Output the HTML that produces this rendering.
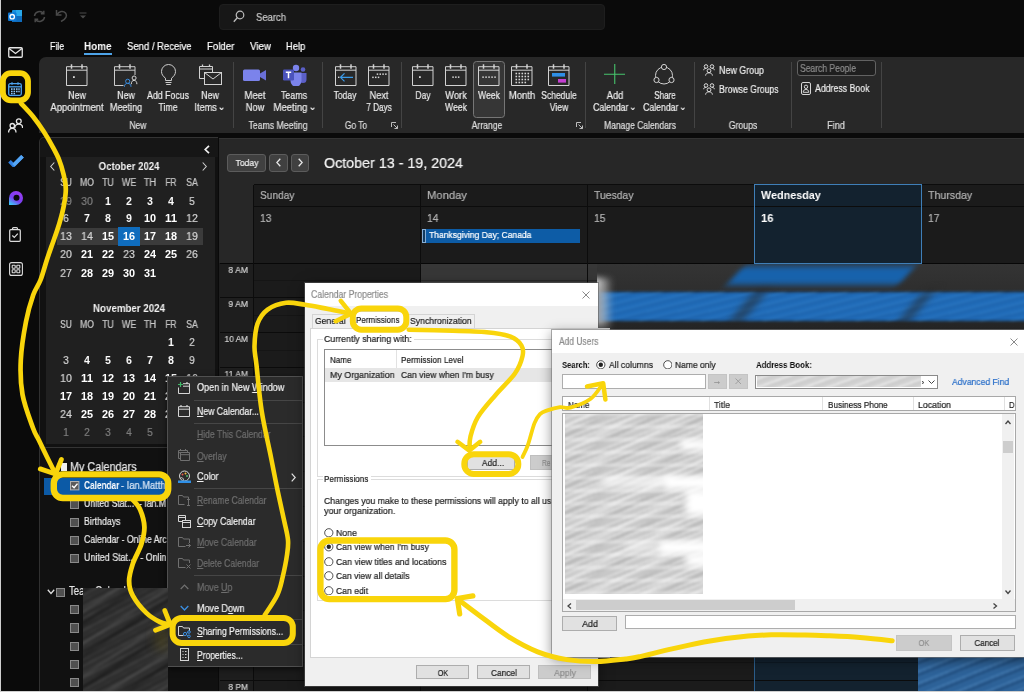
<!DOCTYPE html><html><head><meta charset="utf-8"><title>Outlook Calendar Sharing Permissions</title>
<style>
*{box-sizing:border-box;margin:0;padding:0}
html,body{width:1024px;height:692px;overflow:hidden;background:#0a0a0a}
body{font-family:"Liberation Sans",sans-serif;font-size:11px;color:#e6e6e6;position:relative}
#root{position:absolute;left:0;top:0;width:1024px;height:692px;overflow:hidden;background:#0a0a0a}
.a{position:absolute}
.t{position:absolute;white-space:nowrap;line-height:1;will-change:transform}
.t.l{transform-origin:0 50%}
.t.c{transform:translateX(-50%);text-align:center}
.t.r{transform:translateX(-100%);transform-origin:100% 50%;text-align:right}
u{text-decoration:underline;text-underline-offset:1px}
.t{-webkit-text-stroke:0.22px currentColor}

</style></head><body><div id="root">
<svg width="0" height="0" style="position:absolute"><defs>
<symbol id="cal" viewBox="0 0 22 22"><path d="M0.500 2.700h20.500v18.800h-20.500z M0.500 6.200h20.500" fill="none" stroke="#d2d2d2" stroke-width="1"></path><path d="M5.500 0.200v4.600 M16 0.200v4.600" stroke="#d2d2d2" stroke-width="1.500" fill="none"></path></symbol>
<symbol id="grp" viewBox="0 0 12 12"><g fill="none" stroke="#dcdcdc" stroke-width="1"><circle cx="3" cy="2.500" r="1.800"></circle><circle cx="9" cy="2.500" r="1.800"></circle><circle cx="6" cy="6.800" r="1.900"></circle><path d="M0.700 6.200c0-1.300 1-1.900 2.300-1.900M11.300 6.200c0-1.300-1-1.900-2.300-1.900M2.600 11.600c0.200-1.800 1.500-2.800 3.400-2.800s3.200 1 3.400 2.800"></path></g></symbol>
<symbol id="launch" viewBox="0 0 7 7"><path d="M0.500 5v-4.500h4.500 M2.500 2.500l4 4 M6.500 3.500v3h-3" fill="none" stroke="#bdbdbd"></path></symbol>
</defs></svg>
<div class="a" style="left:0.0px;top:0.0px;width:1.0px;height:692.0px;background:#cfcfcf;"></div>
<svg class="a" style="left:8.0px;top:10.0px;" width="14" height="13" viewBox="0 0 14 13"><rect x="4" y="0" width="10" height="12" rx="1" fill="#1490df"></rect><rect x="8" y="0" width="6" height="6" fill="#28a8ea"></rect><rect x="4" y="6" width="10" height="6" fill="#0f6cbd"></rect><rect x="0" y="2.500" width="8.500" height="8.500" rx="1" fill="#0f78d4"></rect><circle cx="4.200" cy="6.700" r="2.200" fill="none" stroke="#fff" stroke-width="1.300"></circle></svg>
<svg class="a" style="left:33.0px;top:10.0px;" width="13" height="13" viewBox="0 0 13 13"><g fill="none" stroke="#4a4a4a" stroke-width="1.500"><path d="M1.500 6a5 5 0 0 1 9-2.500 M11.500 7a5 5 0 0 1-9 2.500"></path><path d="M10.800 0.800v3h-3 M2.200 12.200v-3h3"></path></g></svg>
<svg class="a" style="left:55.0px;top:9.0px;" width="13" height="13" viewBox="0 0 13 13"><g fill="none" stroke="#4a4a4a" stroke-width="1.500"><path d="M1.500 1v5h5"></path><path d="M1.800 5.800c2-3.500 6.500-4.500 8.700-1.800c2 2.600 0.500 6-4.500 8.500"></path></g></svg>
<svg class="a" style="left:79.0px;top:12.0px;" width="8" height="7" viewBox="0 0 8 7"><path d="M0.500 1h7" stroke="#4a4a4a" stroke-width="1"></path><path d="M1 3.500l3 3l3-3z" fill="#4a4a4a"></path></svg>
<div class="a" style="left:219.0px;top:3.8px;width:386.0px;height:26.0px;background:#171717;border-radius:4px;border:1px solid #1e1e1e;"></div>
<svg class="a" style="left:233.0px;top:10.0px;" width="12" height="13" viewBox="0 0 12 13"><circle cx="7" cy="5" r="3.800" fill="none" stroke="#bdbdbd" stroke-width="1.200"></circle><path d="M4.300 7.800l-3.500 4" stroke="#bdbdbd" stroke-width="1.300"></path></svg>
<div class="t l" style="left: 256px; top: 12.3px; font-size: 10.7px; color: rgb(200, 200, 200); transform: scaleX(0.886);">Search</div>
<svg class="a" style="left:8.0px;top:47.0px;" width="15" height="11" viewBox="0 0 15 11"><rect x="0.750" y="0.750" width="13.500" height="9.500" rx="1" fill="none" stroke="#e6e6e6" stroke-width="1.300"></rect><path d="M1 1.500l6.500 5l6.500-5" fill="none" stroke="#e6e6e6" stroke-width="1.300"></path></svg>
<svg class="a" style="left:8.0px;top:82.0px;" width="14" height="14" viewBox="0 0 14 14"><rect x="0.700" y="1.700" width="12.600" height="11.600" rx="1.500" fill="none" stroke="#4da3ee" stroke-width="1.300"></rect><path d="M0.700 4.800h12.600" stroke="#4da3ee" stroke-width="1.300"></path><path d="M4 0.300v2.400M10 0.300v2.400" stroke="#4da3ee" stroke-width="1.300"></path><g fill="#8cc4f5"><rect x="3" y="6.300" width="1.600" height="1.600"></rect><rect x="5.500" y="6.300" width="1.600" height="1.600"></rect><rect x="8" y="6.300" width="1.600" height="1.600"></rect><rect x="10.300" y="6.300" width="1.400" height="1.600"></rect><rect x="3" y="8.700" width="1.600" height="1.600"></rect><rect x="5.500" y="8.700" width="1.600" height="1.600"></rect><rect x="8" y="8.700" width="1.600" height="1.600"></rect><rect x="10.300" y="8.700" width="1.400" height="1.600"></rect><rect x="3" y="11" width="1.600" height="1.300"></rect><rect x="5.500" y="11" width="1.600" height="1.300"></rect></g></svg>
<svg class="a" style="left:7.5px;top:118.0px;" width="15" height="15" viewBox="0 0 15 15"><g fill="none" stroke="#e6e6e6" stroke-width="1.300"><circle cx="10.800" cy="3.200" r="2.400"></circle><path d="M6.800 10c0-2.500 1.600-3.900 4-3.900s3.800 1.400 3.800 3.900"></path><circle cx="4.300" cy="7.700" r="2.200"></circle><path d="M0.600 14.600c0-2.800 1.500-4.200 3.700-4.200s3.700 1.400 3.700 4.200"></path></g></svg>
<svg class="a" style="left:7.5px;top:155.0px;" width="16" height="12" viewBox="0 0 16 12"><path d="M1.500 6.300l4 4l9-9" fill="none" stroke="#2f7fe0" stroke-width="3.700"></path><path d="M5.500 10.300l9-9" fill="none" stroke="#55a6f5" stroke-width="3.700"></path></svg>
<svg class="a" style="left:7.5px;top:190.0px;" width="16" height="16" viewBox="0 0 16 16"><defs><linearGradient id="lg1" x1="0.800" y1="0" x2="0.200" y2="1"><stop offset="0" stop-color="#9b3bf0"></stop><stop offset="0.600" stop-color="#7a3ff2"></stop><stop offset="1" stop-color="#3ec6f5"></stop></linearGradient></defs><path d="M1 8a7 7 0 1 1 7 7h-7z" fill="url(#lg1)"></path><circle cx="8.500" cy="7.800" r="3" fill="#0a0a0a"></circle></svg>
<svg class="a" style="left:9.0px;top:226.5px;" width="12" height="15" viewBox="0 0 12 15"><g fill="none" stroke="#dcdcdc" stroke-width="1.200"><rect x="0.700" y="2.700" width="10.600" height="11.600" rx="1"></rect><path d="M3.500 2.700v-1a1 1 0 0 1 1-1h3a1 1 0 0 1 1 1v1"></path><path d="M3.300 8.500l2 2l3.500-3.800"></path></g></svg>
<svg class="a" style="left:8.5px;top:262.0px;" width="14" height="14" viewBox="0 0 14 14"><g fill="none" stroke="#dcdcdc" stroke-width="1.100"><rect x="0.600" y="0.600" width="12.800" height="12.800" rx="2"></rect><rect x="3.200" y="3.200" width="3" height="3" rx="0.500"></rect><rect x="7.800" y="3.200" width="3" height="3" rx="0.500"></rect><rect x="3.200" y="7.800" width="3" height="3" rx="0.500"></rect><rect x="7.800" y="7.800" width="3" height="3" rx="0.500"></rect></g></svg>
<div class="t l" style="left: 49.8px; top: 41.3px; font-size: 10.7px; color: rgb(255, 255, 255); transform: scaleX(0.824);">File</div>
<div class="t l" style="left: 84px; top: 41.3px; font-size: 10.7px; color: rgb(255, 255, 255); font-weight: bold; -webkit-text-stroke: 0px; transform: scaleX(0.926);">Home</div>
<div class="a" style="left:84.0px;top:52.8px;width:28.0px;height:1.8px;background:#4da3e8;"></div>
<div class="t l" style="left: 126.7px; top: 41.3px; font-size: 10.7px; color: rgb(255, 255, 255); transform: scaleX(0.89);">Send / Receive</div>
<div class="t l" style="left: 206.9px; top: 41.3px; font-size: 10.7px; color: rgb(255, 255, 255); transform: scaleX(0.904);">Folder</div>
<div class="t l" style="left: 249.5px; top: 41.3px; font-size: 10.7px; color: rgb(255, 255, 255); transform: scaleX(0.914);">View</div>
<div class="t l" style="left: 285.6px; top: 41.3px; font-size: 10.7px; color: rgb(255, 255, 255); transform: scaleX(0.878);">Help</div>
<div class="a" style="left:39.3px;top:57.1px;width:990.0px;height:76.2px;background:#282828;border-radius:7px 0 0 0;"></div>
<svg class="a" style="left:65.8px;top:63.8px;" width="22" height="22"><use href="#cal"></use><rect x="7" y="12.200" width="1.800" height="1.800" fill="#d6d6d6"></rect></svg>
<div class="t c" style="left: 77px; top: 89.5px; font-size: 10.7px; color: rgb(235, 235, 235); transform: translateX(-50%) scaleX(0.823);">New</div>
<div class="t c" style="left: 77px; top: 101.5px; font-size: 10.7px; color: rgb(235, 235, 235); transform: translateX(-50%) scaleX(0.888);">Appointment</div>
<svg class="a" style="left:114.2px;top:63.8px;" width="24" height="23" viewBox="0 0 24 23"><path d="M0.500 2.700h20.500v18.800h-20.500z M0.500 6.200h20.500" fill="none" stroke="#cdcdcd"></path><path d="M5.500 0.200v4.600 M16 0.200v4.600" stroke="#cdcdcd" stroke-width="1.500"></path><rect x="9.500" y="11" width="14.500" height="12" fill="#282828"></rect><circle cx="20.100" cy="14" r="2" fill="none" stroke="#d6d6d6"></circle><path d="M17.300 20.200c0-2.500 1.100-3.800 2.800-3.800s2.800 1.300 2.800 3.800" fill="none" stroke="#d6d6d6"></path><circle cx="13.700" cy="17.300" r="2.100" fill="#282828" stroke="#3b8ee0"></circle><path d="M10.400 22.800c0-2.400 1.300-3.400 3.300-3.400s3.300 1 3.300 3.400" fill="#282828" stroke="#3b8ee0"></path></svg>
<div class="t c" style="left: 125.5px; top: 89.5px; font-size: 10.7px; color: rgb(235, 235, 235); transform: translateX(-50%) scaleX(0.818);">New</div>
<div class="t c" style="left: 125.5px; top: 101.5px; font-size: 10.7px; color: rgb(235, 235, 235); transform: translateX(-50%) scaleX(0.849);">Meeting</div>
<svg class="a" style="left:160.5px;top:63.6px;" width="15" height="22.5" viewBox="0 0 15 22.500"><path d="M4.500 16.500v-2.300c-2.400-1.800-4-3.900-4-6.700a7 7 0 0 1 14 0c0 2.800-1.600 4.900-4 6.700v2.300z M4.500 18.500h6 M5.200 20.500h4.600" fill="none" stroke="#cdcdcd"></path></svg>
<div class="t c" style="left: 168.4px; top: 89.5px; font-size: 10.7px; color: rgb(235, 235, 235); transform: translateX(-50%) scaleX(0.822);">Add Focus</div>
<div class="t c" style="left: 168.4px; top: 101.5px; font-size: 10.7px; color: rgb(235, 235, 235); transform: translateX(-50%) scaleX(0.822);">Time</div>
<svg class="a" style="left:198.5px;top:63.8px;" width="23" height="22" viewBox="0 0 23 22"><path d="M0.500 2.500h13v12h-13z M0.500 5h13" fill="none" stroke="#d2d2d2"></path><path d="M3.500 0.500v2 M10.500 0.500v2" stroke="#d2d2d2" stroke-width="1.300"></path><rect x="5.500" y="8.500" width="17" height="12" fill="#282828" stroke="#d2d2d2"></rect><path d="M5.500 8.500l8.500 6.500l8.500-6.500" fill="none" stroke="#d2d2d2"></path></svg>
<div class="t c" style="left: 209.9px; top: 89.5px; font-size: 10.7px; color: rgb(235, 235, 235); transform: translateX(-50%) scaleX(0.823);">New</div>
<div class="t c" style="left: 209.4px; top: 101.5px; font-size: 10.7px; color: rgb(235, 235, 235); transform: translateX(-50%) scaleX(0.852);">Items<svg width="5.500" height="3.500" viewBox="0 0 5.500 3.500" style="margin-left:2.500px;vertical-align:1px"><path d="M0.600 0.600l2.150 2.100l2.150-2.100" fill="none" stroke="#ebebeb" stroke-width="1.300"></path></svg></div>
<div class="t c" style="left: 138px; top: 120.7px; font-size: 10.2px; color: rgb(222, 222, 222); transform: translateX(-50%) scaleX(0.834);">New</div>
<div class="a" style="left:233.0px;top:61.5px;width:1.0px;height:66.0px;background:#444444;"></div>
<svg class="a" style="left:243.0px;top:69.0px;" width="24" height="13" viewBox="0 0 24 13"><rect x="0" y="0.500" width="17" height="11.500" rx="1.500" fill="#7b83eb"></rect><path d="M17 4.500l6-3.500v10.500l-6-3.500z" fill="#6a70d8"></path></svg>
<div class="t c" style="left: 255px; top: 89.5px; font-size: 10.7px; color: rgb(235, 235, 235); transform: translateX(-50%) scaleX(0.884);">Meet</div>
<div class="t c" style="left: 255px; top: 101.5px; font-size: 10.7px; color: rgb(235, 235, 235); transform: translateX(-50%) scaleX(0.865);">Now</div>
<svg class="a" style="left:283.0px;top:64.0px;" width="24" height="22" viewBox="0 0 24 22"><circle cx="13" cy="4" r="3.200" fill="#7b83eb"></circle><circle cx="20" cy="5.500" r="2.300" fill="#5b5fc7"></circle><path d="M16 9h7.500v6.500a3.500 3.500 0 0 1-7 0z" fill="#5b5fc7"></path><path d="M7 8.500h11.500v8.500a5.500 5.500 0 0 1-11 0z" fill="#7b83eb"></path><rect x="0" y="5.500" width="11" height="11" rx="1.200" fill="#4b53bc"></rect><path d="M2.800 8.200h5.400M5.500 8.200v6" stroke="#fff" stroke-width="1.500" fill="none"></path></svg>
<div class="t c" style="left: 294px; top: 90.3px; font-size: 10.7px; color: rgb(235, 235, 235); transform: translateX(-50%) scaleX(0.826);">Teams</div>
<div class="t c" style="left: 294px; top: 102.3px; font-size: 10.7px; color: rgb(235, 235, 235); transform: translateX(-50%) scaleX(0.891);">Meeting<svg width="5.500" height="3.500" viewBox="0 0 5.500 3.500" style="margin-left:2.500px;vertical-align:1px"><path d="M0.600 0.600l2.150 2.100l2.150-2.100" fill="none" stroke="#ebebeb" stroke-width="1.300"></path></svg></div>
<div class="t c" style="left: 278px; top: 120.7px; font-size: 10.2px; color: rgb(222, 222, 222); transform: translateX(-50%) scaleX(0.854);">Teams Meeting</div>
<div class="a" style="left:322.0px;top:61.5px;width:1.0px;height:66.0px;background:#444444;"></div>
<svg class="a" style="left:334.9px;top:63.8px;" width="22" height="22"><use href="#cal"></use><path d="M18 13.300h-12.500 M9.500 9.300l-4 4l4 4" fill="none" stroke="#3b9be8" stroke-width="1.200"></path><rect x="3" y="12.600" width="1.400" height="1.400" fill="#d6d6d6"></rect></svg>
<div class="t c" style="left: 345.3px; top: 89.5px; font-size: 10.7px; color: rgb(235, 235, 235); transform: translateX(-50%) scaleX(0.796);">Today</div>
<svg class="a" style="left:367.9px;top:63.8px;" width="22" height="22"><use href="#cal"></use><g fill="#d6d6d6"><rect x="8.700" y="9.400" width="1.500" height="1.500"></rect><rect x="11.500" y="9.400" width="1.500" height="1.500"></rect><rect x="14.300" y="9.400" width="1.500" height="1.500"></rect><rect x="17.100" y="9.400" width="1.500" height="1.500"></rect><rect x="4.200" y="12.600" width="1.500" height="1.500"></rect><rect x="7" y="12.600" width="1.500" height="1.500"></rect><rect x="9.800" y="12.600" width="1.500" height="1.500"></rect></g></svg>
<div class="t c" style="left: 378.8px; top: 89.5px; font-size: 10.7px; color: rgb(235, 235, 235); transform: translateX(-50%) scaleX(0.855);">Next</div>
<div class="t c" style="left: 378.8px; top: 101.5px; font-size: 10.7px; color: rgb(235, 235, 235); transform: translateX(-50%) scaleX(0.764);">7 Days</div>
<div class="t c" style="left: 356.2px; top: 120.7px; font-size: 10.2px; color: rgb(222, 222, 222); transform: translateX(-50%) scaleX(0.826);">Go To</div>
<svg class="a" style="left:391.3px;top:121.5px;" width="7" height="7"><use href="#launch"></use></svg>
<div class="a" style="left:400.7px;top:61.5px;width:1.0px;height:66.0px;background:#444444;"></div>
<div class="a" style="left:473.3px;top:60.5px;width:31.3px;height:57.4px;background:#363636;border:1px solid #767676;border-radius:3.500px;"></div>
<svg class="a" style="left:411.5px;top:63.8px;" width="22" height="22"><use href="#cal"></use><rect x="7" y="12.200" width="1.800" height="1.800" fill="#d6d6d6"></rect></svg>
<div class="t c" style="left: 422.6px; top: 89.5px; font-size: 10.7px; color: rgb(235, 235, 235); transform: translateX(-50%) scaleX(0.784);">Day</div>
<svg class="a" style="left:444.7px;top:63.8px;" width="22" height="22"><use href="#cal"></use><g fill="#d6d6d6"><rect x="7.300" y="12.400" width="1.500" height="1.500"></rect><rect x="10.100" y="12.400" width="1.500" height="1.500"></rect><rect x="12.900" y="12.400" width="1.500" height="1.500"></rect></g></svg>
<div class="t c" style="left: 455.7px; top: 89.5px; font-size: 10.7px; color: rgb(235, 235, 235); transform: translateX(-50%) scaleX(0.869);">Work</div>
<div class="t c" style="left: 455.7px; top: 101.5px; font-size: 10.7px; color: rgb(235, 235, 235); transform: translateX(-50%) scaleX(0.811);">Week</div>
<svg class="a" style="left:477.5px;top:63.8px;" width="22" height="22"><use href="#cal"></use><g fill="#d6d6d6"><rect x="4.300" y="12.400" width="1.500" height="1.500"></rect><rect x="7.300" y="12.400" width="1.500" height="1.500"></rect><rect x="10.300" y="12.400" width="1.500" height="1.500"></rect><rect x="13.300" y="12.400" width="1.500" height="1.500"></rect><rect x="16.300" y="12.400" width="1.500" height="1.500"></rect></g></svg>
<div class="t c" style="left: 488.8px; top: 89.5px; font-size: 10.7px; color: rgb(235, 235, 235); transform: translateX(-50%) scaleX(0.807);">Week</div>
<svg class="a" style="left:511.2px;top:63.8px;" width="22" height="22"><use href="#cal"></use><g fill="#d6d6d6"><rect x="4.5" y="8.7" width="1.600" height="1.600"></rect><rect x="7.5" y="8.7" width="1.600" height="1.600"></rect><rect x="10.5" y="8.7" width="1.600" height="1.600"></rect><rect x="13.5" y="8.7" width="1.600" height="1.600"></rect><rect x="16.5" y="8.7" width="1.600" height="1.600"></rect><rect x="4.5" y="11.7" width="1.600" height="1.600"></rect><rect x="7.5" y="11.7" width="1.600" height="1.600"></rect><rect x="10.5" y="11.7" width="1.600" height="1.600"></rect><rect x="13.5" y="11.7" width="1.600" height="1.600"></rect><rect x="16.5" y="11.7" width="1.600" height="1.600"></rect><rect x="4.5" y="14.7" width="1.600" height="1.600"></rect><rect x="7.5" y="14.7" width="1.600" height="1.600"></rect><rect x="10.5" y="14.7" width="1.600" height="1.600"></rect><rect x="13.5" y="14.7" width="1.600" height="1.600"></rect><rect x="16.5" y="14.7" width="1.600" height="1.600"></rect><rect x="4.5" y="17.7" width="1.600" height="1.600"></rect><rect x="7.5" y="17.7" width="1.600" height="1.600"></rect><rect x="10.5" y="17.7" width="1.600" height="1.600"></rect><rect x="13.5" y="17.7" width="1.600" height="1.600"></rect></g></svg>
<div class="t c" style="left: 522px; top: 89.5px; font-size: 10.7px; color: rgb(235, 235, 235); transform: translateX(-50%) scaleX(0.888);">Month</div>
<svg class="a" style="left:548.1px;top:63.8px;" width="22" height="22"><use href="#cal"></use><rect x="4" y="9" width="13" height="3.600" fill="#2f8fe6"></rect><rect x="10" y="15" width="8" height="3.600" fill="#c43fd1"></rect></svg>
<div class="t c" style="left: 559.3px; top: 89.5px; font-size: 10.7px; color: rgb(235, 235, 235); transform: translateX(-50%) scaleX(0.801);">Schedule</div>
<div class="t c" style="left: 559.3px; top: 101.5px; font-size: 10.7px; color: rgb(235, 235, 235); transform: translateX(-50%) scaleX(0.809);">View</div>
<div class="t c" style="left: 487.3px; top: 120.7px; font-size: 10.2px; color: rgb(222, 222, 222); transform: translateX(-50%) scaleX(0.847);">Arrange</div>
<svg class="a" style="left:576.0px;top:121.5px;" width="7" height="7"><use href="#launch"></use></svg>
<div class="a" style="left:585.0px;top:61.5px;width:1.0px;height:66.0px;background:#444444;"></div>
<svg class="a" style="left:603.5px;top:63.8px;" width="21.5" height="20.6" viewBox="0 0 21.500 20.600"><path d="M10.750 0v20.600 M0 10.300h21.500" stroke="#46c46c" stroke-width="1.100" fill="none"></path></svg>
<div class="t c" style="left: 615px; top: 89.5px; font-size: 10.7px; color: rgb(235, 235, 235); transform: translateX(-50%) scaleX(0.872);">Add</div>
<div class="t c" style="left: 614.3px; top: 101.5px; font-size: 10.7px; color: rgb(235, 235, 235); transform: translateX(-50%) scaleX(0.814);">Calendar<svg width="5.500" height="3.500" viewBox="0 0 5.500 3.500" style="margin-left:2.500px;vertical-align:1px"><path d="M0.600 0.600l2.150 2.100l2.150-2.100" fill="none" stroke="#ebebeb" stroke-width="1.300"></path></svg></div>
<svg class="a" style="left:652.0px;top:63.0px;" width="24" height="24" viewBox="0 0 24 24"><g fill="none" stroke="#d2d2d2"><circle cx="12" cy="12.500" r="8.500"></circle></g><g fill="#282828" stroke="#d2d2d2"><circle cx="12" cy="4" r="2.600"></circle><circle cx="4.500" cy="17" r="2.600"></circle><circle cx="19.500" cy="17" r="2.600"></circle></g></svg>
<div class="t c" style="left: 664.5px; top: 89.5px; font-size: 10.7px; color: rgb(235, 235, 235); transform: translateX(-50%) scaleX(0.754);">Share</div>
<div class="t c" style="left: 663.6px; top: 101.5px; font-size: 10.7px; color: rgb(235, 235, 235); transform: translateX(-50%) scaleX(0.814);">Calendar<svg width="5.500" height="3.500" viewBox="0 0 5.500 3.500" style="margin-left:2.500px;vertical-align:1px"><path d="M0.600 0.600l2.150 2.100l2.150-2.100" fill="none" stroke="#ebebeb" stroke-width="1.300"></path></svg></div>
<div class="t c" style="left: 639.8px; top: 120.7px; font-size: 10.2px; color: rgb(222, 222, 222); transform: translateX(-50%) scaleX(0.835);">Manage Calendars</div>
<div class="a" style="left:693.7px;top:61.5px;width:1.0px;height:66.0px;background:#444444;"></div>
<svg class="a" style="left:703.0px;top:63.5px;" width="12" height="12"><use href="#grp"></use></svg>
<div class="t l" style="left: 718.7px; top: 64.6px; font-size: 10.7px; color: rgb(235, 235, 235); transform: scaleX(0.832);">New Group</div>
<svg class="a" style="left:703.0px;top:83.0px;" width="12" height="12"><use href="#grp"></use></svg>
<div class="t l" style="left: 718.7px; top: 84.4px; font-size: 10.7px; color: rgb(235, 235, 235); transform: scaleX(0.809);">Browse Groups</div>
<div class="t c" style="left: 742.5px; top: 120.7px; font-size: 10.2px; color: rgb(222, 222, 222); transform: translateX(-50%) scaleX(0.853);">Groups</div>
<div class="a" style="left:790.5px;top:61.5px;width:1.0px;height:66.0px;background:#444444;"></div>
<div class="a" style="left:797.3px;top:60.2px;width:78.5px;height:16.3px;background:#1f1f1f;border:1px solid #626262;border-radius:3px;"></div>
<div class="t l" style="left: 800px; top: 63.3px; font-size: 10.7px; color: rgb(140, 140, 140); transform: scaleX(0.799);">Search People</div>
<svg class="a" style="left:801.4px;top:82.0px;" width="10" height="13" viewBox="0 0 10 13"><rect x="0.500" y="0.500" width="9" height="12" rx="1.500" fill="none" stroke="#d6d6d6"></rect><circle cx="5" cy="4.800" r="1.700" fill="none" stroke="#d6d6d6"></circle><path d="M2.200 10.300c0-2 1.200-2.800 2.800-2.800s2.800 0.800 2.800 2.800z" fill="none" stroke="#d6d6d6"></path></svg>
<div class="t l" style="left: 815px; top: 83.1px; font-size: 10.7px; color: rgb(235, 235, 235); transform: scaleX(0.819);">Address Book</div>
<div class="t c" style="left: 836.4px; top: 120.7px; font-size: 10.2px; color: rgb(222, 222, 222); transform: translateX(-50%) scaleX(0.883);">Find</div>
<div class="a" style="left:881.4px;top:61.5px;width:1.0px;height:66.0px;background:#444444;"></div>
<div class="a" style="left:39.3px;top:137.3px;width:179.0px;height:560.0px;background:#111111;border-radius:5px 0 0 0;border-top:1px solid #343434;border-left:1px solid #303030;"></div>
<div class="a" style="left:40.3px;top:138.3px;width:177.7px;height:19.0px;background:#161616;border-radius:5px 0 0 0;"></div>
<div class="a" style="left:45.5px;top:157.3px;width:169.0px;height:286.5px;background:#202020;"></div>
<svg class="a" style="left:204.0px;top:144.5px;" width="6" height="9" viewBox="0 0 6 9"><path d="M5 0.800l-3.800 3.700l3.800 3.700" fill="none" stroke="#f0f0f0" stroke-width="1.700"></path></svg>
<svg class="a" style="left:50.0px;top:161.5px;" width="5" height="9" viewBox="0 0 5 9"><path d="M4.300 0.500l-3.600 4l3.600 4" fill="none" stroke="#d0d0d0" stroke-width="1.100"></path></svg>
<svg class="a" style="left:201.5px;top:161.5px;" width="5" height="9" viewBox="0 0 5 9"><path d="M0.700 0.500l3.600 4l-3.600 4" fill="none" stroke="#d0d0d0" stroke-width="1.100"></path></svg>
<div class="a" style="left:57.0px;top:227.5px;width:146.2px;height:17.7px;background:#3b3b3b;"></div>
<div class="a" style="left:118.0px;top:226.5px;width:21.8px;height:19.0px;background:#0f6cbd;"></div>
<div class="t c" style="left: 128.7px; top: 160.7px; font-size: 10.8px; color: rgb(242, 242, 242); font-weight: bold; -webkit-text-stroke: 0px; transform: translateX(-50%) scaleX(0.887);">October 2024</div>
<div class="t c" style="left: 65.7px; top: 178.2px; font-size: 10px; color: rgb(201, 201, 201); transform: translateX(-50%) scaleX(0.827);">SU</div>
<div class="t c" style="left: 86.7px; top: 178.2px; font-size: 10px; color: rgb(201, 201, 201); transform: translateX(-50%) scaleX(0.869);">MO</div>
<div class="t c" style="left: 107.7px; top: 178.2px; font-size: 10px; color: rgb(201, 201, 201); transform: translateX(-50%) scaleX(0.862);">TU</div>
<div class="t c" style="left: 128.6px; top: 178.2px; font-size: 10px; color: rgb(201, 201, 201); transform: translateX(-50%) scaleX(0.9);">WE</div>
<div class="t c" style="left: 149.7px; top: 178.2px; font-size: 10px; color: rgb(201, 201, 201); transform: translateX(-50%) scaleX(0.937);">TH</div>
<div class="t c" style="left: 170.8px; top: 178.2px; font-size: 10px; color: rgb(201, 201, 201); transform: translateX(-50%) scaleX(0.824);">FR</div>
<div class="t c" style="left: 192.1px; top: 178.2px; font-size: 10px; color: rgb(201, 201, 201); transform: translateX(-50%) scaleX(0.862);">SA</div>
<div class="t c" style="left: 65.7px; top: 195.6px; font-size: 10.6px; color: rgb(126, 126, 126); transform: translateX(-50%) scaleX(0.975);">29</div>
<div class="t c" style="left: 86.7px; top: 195.6px; font-size: 10.6px; color: rgb(126, 126, 126); transform: translateX(-50%) scaleX(0.975);">30</div>
<div class="t c" style="left: 107.7px; top: 195.6px; font-size: 10.6px; color: rgb(255, 255, 255); font-weight: bold; -webkit-text-stroke: 0px; transform: translateX(-50%) scaleX(0.978);">1</div>
<div class="t c" style="left: 128.6px; top: 195.6px; font-size: 10.6px; color: rgb(255, 255, 255); font-weight: bold; -webkit-text-stroke: 0px; transform: translateX(-50%) scaleX(0.978);">2</div>
<div class="t c" style="left: 149.7px; top: 195.6px; font-size: 10.6px; color: rgb(255, 255, 255); font-weight: bold; -webkit-text-stroke: 0px; transform: translateX(-50%) scaleX(0.978);">3</div>
<div class="t c" style="left: 170.8px; top: 195.6px; font-size: 10.6px; color: rgb(255, 255, 255); font-weight: bold; -webkit-text-stroke: 0px; transform: translateX(-50%) scaleX(0.978);">4</div>
<div class="t c" style="left: 192.1px; top: 195.6px; font-size: 10.6px; color: rgb(212, 212, 212); transform: translateX(-50%) scaleX(0.931);">5</div>
<div class="t c" style="left: 65.7px; top: 213.4px; font-size: 10.6px; color: rgb(212, 212, 212); transform: translateX(-50%) scaleX(0.931);">6</div>
<div class="t c" style="left: 86.7px; top: 213.4px; font-size: 10.6px; color: rgb(255, 255, 255); font-weight: bold; -webkit-text-stroke: 0px; transform: translateX(-50%) scaleX(0.978);">7</div>
<div class="t c" style="left: 107.7px; top: 213.4px; font-size: 10.6px; color: rgb(255, 255, 255); font-weight: bold; -webkit-text-stroke: 0px; transform: translateX(-50%) scaleX(0.978);">8</div>
<div class="t c" style="left: 128.6px; top: 213.4px; font-size: 10.6px; color: rgb(255, 255, 255); font-weight: bold; -webkit-text-stroke: 0px; transform: translateX(-50%) scaleX(0.978);">9</div>
<div class="t c" style="left: 149.7px; top: 213.4px; font-size: 10.6px; color: rgb(255, 255, 255); font-weight: bold; -webkit-text-stroke: 0px; transform: translateX(-50%) scaleX(1.024);">10</div>
<div class="t c" style="left: 170.8px; top: 213.4px; font-size: 10.6px; color: rgb(255, 255, 255); font-weight: bold; -webkit-text-stroke: 0px; transform: translateX(-50%) scaleX(1.078);">11</div>
<div class="t c" style="left: 192.1px; top: 213.4px; font-size: 10.6px; color: rgb(212, 212, 212); transform: translateX(-50%) scaleX(0.975);">12</div>
<div class="t c" style="left: 65.7px; top: 231.3px; font-size: 10.6px; color: rgb(212, 212, 212); transform: translateX(-50%) scaleX(0.975);">13</div>
<div class="t c" style="left: 86.7px; top: 231.3px; font-size: 10.6px; color: rgb(212, 212, 212); transform: translateX(-50%) scaleX(0.975);">14</div>
<div class="t c" style="left: 107.7px; top: 231.3px; font-size: 10.6px; color: rgb(255, 255, 255); font-weight: bold; -webkit-text-stroke: 0px; transform: translateX(-50%) scaleX(1.024);">15</div>
<div class="t c" style="left: 128.6px; top: 231.3px; font-size: 10.6px; color: rgb(255, 255, 255); font-weight: bold; -webkit-text-stroke: 0px; transform: translateX(-50%) scaleX(1.024);">16</div>
<div class="t c" style="left: 149.7px; top: 231.3px; font-size: 10.6px; color: rgb(255, 255, 255); font-weight: bold; -webkit-text-stroke: 0px; transform: translateX(-50%) scaleX(1.024);">17</div>
<div class="t c" style="left: 170.8px; top: 231.3px; font-size: 10.6px; color: rgb(255, 255, 255); font-weight: bold; -webkit-text-stroke: 0px; transform: translateX(-50%) scaleX(1.024);">18</div>
<div class="t c" style="left: 192.1px; top: 231.3px; font-size: 10.6px; color: rgb(212, 212, 212); transform: translateX(-50%) scaleX(0.975);">19</div>
<div class="t c" style="left: 65.7px; top: 249.4px; font-size: 10.6px; color: rgb(212, 212, 212); transform: translateX(-50%) scaleX(0.975);">20</div>
<div class="t c" style="left: 86.7px; top: 249.4px; font-size: 10.6px; color: rgb(255, 255, 255); font-weight: bold; -webkit-text-stroke: 0px; transform: translateX(-50%) scaleX(1.024);">21</div>
<div class="t c" style="left: 107.7px; top: 249.4px; font-size: 10.6px; color: rgb(255, 255, 255); font-weight: bold; -webkit-text-stroke: 0px; transform: translateX(-50%) scaleX(1.024);">22</div>
<div class="t c" style="left: 128.6px; top: 249.4px; font-size: 10.6px; color: rgb(212, 212, 212); transform: translateX(-50%) scaleX(0.975);">23</div>
<div class="t c" style="left: 149.7px; top: 249.4px; font-size: 10.6px; color: rgb(255, 255, 255); font-weight: bold; -webkit-text-stroke: 0px; transform: translateX(-50%) scaleX(1.024);">24</div>
<div class="t c" style="left: 170.8px; top: 249.4px; font-size: 10.6px; color: rgb(255, 255, 255); font-weight: bold; -webkit-text-stroke: 0px; transform: translateX(-50%) scaleX(1.024);">25</div>
<div class="t c" style="left: 192.1px; top: 249.4px; font-size: 10.6px; color: rgb(212, 212, 212); transform: translateX(-50%) scaleX(0.975);">26</div>
<div class="t c" style="left: 65.7px; top: 267.6px; font-size: 10.6px; color: rgb(212, 212, 212); transform: translateX(-50%) scaleX(0.975);">27</div>
<div class="t c" style="left: 86.7px; top: 267.6px; font-size: 10.6px; color: rgb(255, 255, 255); font-weight: bold; -webkit-text-stroke: 0px; transform: translateX(-50%) scaleX(1.024);">28</div>
<div class="t c" style="left: 107.7px; top: 267.6px; font-size: 10.6px; color: rgb(255, 255, 255); font-weight: bold; -webkit-text-stroke: 0px; transform: translateX(-50%) scaleX(1.024);">29</div>
<div class="t c" style="left: 128.6px; top: 267.6px; font-size: 10.6px; color: rgb(255, 255, 255); font-weight: bold; -webkit-text-stroke: 0px; transform: translateX(-50%) scaleX(1.024);">30</div>
<div class="t c" style="left: 149.7px; top: 267.6px; font-size: 10.6px; color: rgb(255, 255, 255); font-weight: bold; -webkit-text-stroke: 0px; transform: translateX(-50%) scaleX(1.024);">31</div>
<div class="t c" style="left: 128.7px; top: 302.7px; font-size: 10.8px; color: rgb(242, 242, 242); font-weight: bold; -webkit-text-stroke: 0px; transform: translateX(-50%) scaleX(0.903);">November 2024</div>
<div class="t c" style="left: 65.7px; top: 319.9px; font-size: 10px; color: rgb(201, 201, 201); transform: translateX(-50%) scaleX(0.827);">SU</div>
<div class="t c" style="left: 86.7px; top: 319.9px; font-size: 10px; color: rgb(201, 201, 201); transform: translateX(-50%) scaleX(0.869);">MO</div>
<div class="t c" style="left: 107.7px; top: 319.9px; font-size: 10px; color: rgb(201, 201, 201); transform: translateX(-50%) scaleX(0.862);">TU</div>
<div class="t c" style="left: 128.6px; top: 319.9px; font-size: 10px; color: rgb(201, 201, 201); transform: translateX(-50%) scaleX(0.9);">WE</div>
<div class="t c" style="left: 149.7px; top: 319.9px; font-size: 10px; color: rgb(201, 201, 201); transform: translateX(-50%) scaleX(0.937);">TH</div>
<div class="t c" style="left: 170.8px; top: 319.9px; font-size: 10px; color: rgb(201, 201, 201); transform: translateX(-50%) scaleX(0.824);">FR</div>
<div class="t c" style="left: 192.1px; top: 319.9px; font-size: 10px; color: rgb(201, 201, 201); transform: translateX(-50%) scaleX(0.862);">SA</div>
<div class="t c" style="left: 170.8px; top: 337.2px; font-size: 10.6px; color: rgb(255, 255, 255); font-weight: bold; -webkit-text-stroke: 0px; transform: translateX(-50%) scaleX(0.978);">1</div>
<div class="t c" style="left: 192.1px; top: 337.2px; font-size: 10.6px; color: rgb(212, 212, 212); transform: translateX(-50%) scaleX(0.931);">2</div>
<div class="t c" style="left: 65.7px; top: 355.3px; font-size: 10.6px; color: rgb(212, 212, 212); transform: translateX(-50%) scaleX(0.931);">3</div>
<div class="t c" style="left: 86.7px; top: 355.3px; font-size: 10.6px; color: rgb(255, 255, 255); font-weight: bold; -webkit-text-stroke: 0px; transform: translateX(-50%) scaleX(0.978);">4</div>
<div class="t c" style="left: 107.7px; top: 355.3px; font-size: 10.6px; color: rgb(255, 255, 255); font-weight: bold; -webkit-text-stroke: 0px; transform: translateX(-50%) scaleX(0.978);">5</div>
<div class="t c" style="left: 128.6px; top: 355.3px; font-size: 10.6px; color: rgb(255, 255, 255); font-weight: bold; -webkit-text-stroke: 0px; transform: translateX(-50%) scaleX(0.978);">6</div>
<div class="t c" style="left: 149.7px; top: 355.3px; font-size: 10.6px; color: rgb(255, 255, 255); font-weight: bold; -webkit-text-stroke: 0px; transform: translateX(-50%) scaleX(0.978);">7</div>
<div class="t c" style="left: 170.8px; top: 355.3px; font-size: 10.6px; color: rgb(255, 255, 255); font-weight: bold; -webkit-text-stroke: 0px; transform: translateX(-50%) scaleX(0.978);">8</div>
<div class="t c" style="left: 192.1px; top: 355.3px; font-size: 10.6px; color: rgb(212, 212, 212); transform: translateX(-50%) scaleX(0.931);">9</div>
<div class="t c" style="left: 65.7px; top: 373.3px; font-size: 10.6px; color: rgb(212, 212, 212); transform: translateX(-50%) scaleX(0.975);">10</div>
<div class="t c" style="left: 86.7px; top: 373.3px; font-size: 10.6px; color: rgb(255, 255, 255); font-weight: bold; -webkit-text-stroke: 0px; transform: translateX(-50%) scaleX(1.078);">11</div>
<div class="t c" style="left: 107.7px; top: 373.3px; font-size: 10.6px; color: rgb(255, 255, 255); font-weight: bold; -webkit-text-stroke: 0px; transform: translateX(-50%) scaleX(1.024);">12</div>
<div class="t c" style="left: 128.6px; top: 373.3px; font-size: 10.6px; color: rgb(255, 255, 255); font-weight: bold; -webkit-text-stroke: 0px; transform: translateX(-50%) scaleX(1.024);">13</div>
<div class="t c" style="left: 149.7px; top: 373.3px; font-size: 10.6px; color: rgb(255, 255, 255); font-weight: bold; -webkit-text-stroke: 0px; transform: translateX(-50%) scaleX(1.024);">14</div>
<div class="t c" style="left: 170.8px; top: 373.3px; font-size: 10.6px; color: rgb(255, 255, 255); font-weight: bold; -webkit-text-stroke: 0px; transform: translateX(-50%) scaleX(1.024);">15</div>
<div class="t c" style="left: 192.1px; top: 373.3px; font-size: 10.6px; color: rgb(212, 212, 212); transform: translateX(-50%) scaleX(0.975);">16</div>
<div class="t c" style="left: 65.7px; top: 391.3px; font-size: 10.6px; color: rgb(255, 255, 255); font-weight: bold; -webkit-text-stroke: 0px; transform: translateX(-50%) scaleX(1.024);">17</div>
<div class="t c" style="left: 86.7px; top: 391.3px; font-size: 10.6px; color: rgb(255, 255, 255); font-weight: bold; -webkit-text-stroke: 0px; transform: translateX(-50%) scaleX(1.024);">18</div>
<div class="t c" style="left: 107.7px; top: 391.3px; font-size: 10.6px; color: rgb(255, 255, 255); font-weight: bold; -webkit-text-stroke: 0px; transform: translateX(-50%) scaleX(1.024);">19</div>
<div class="t c" style="left: 128.6px; top: 391.3px; font-size: 10.6px; color: rgb(255, 255, 255); font-weight: bold; -webkit-text-stroke: 0px; transform: translateX(-50%) scaleX(1.024);">20</div>
<div class="t c" style="left: 149.7px; top: 391.3px; font-size: 10.6px; color: rgb(255, 255, 255); font-weight: bold; -webkit-text-stroke: 0px; transform: translateX(-50%) scaleX(1.024);">21</div>
<div class="t c" style="left: 170.8px; top: 391.3px; font-size: 10.6px; color: rgb(255, 255, 255); font-weight: bold; -webkit-text-stroke: 0px; transform: translateX(-50%) scaleX(1.024);">22</div>
<div class="t c" style="left: 192.1px; top: 391.3px; font-size: 10.6px; color: rgb(212, 212, 212); transform: translateX(-50%) scaleX(0.975);">23</div>
<div class="t c" style="left: 65.7px; top: 409.4px; font-size: 10.6px; color: rgb(212, 212, 212); transform: translateX(-50%) scaleX(0.975);">24</div>
<div class="t c" style="left: 86.7px; top: 409.4px; font-size: 10.6px; color: rgb(255, 255, 255); font-weight: bold; -webkit-text-stroke: 0px; transform: translateX(-50%) scaleX(1.024);">25</div>
<div class="t c" style="left: 107.7px; top: 409.4px; font-size: 10.6px; color: rgb(255, 255, 255); font-weight: bold; -webkit-text-stroke: 0px; transform: translateX(-50%) scaleX(1.024);">26</div>
<div class="t c" style="left: 128.6px; top: 409.4px; font-size: 10.6px; color: rgb(255, 255, 255); font-weight: bold; -webkit-text-stroke: 0px; transform: translateX(-50%) scaleX(1.024);">27</div>
<div class="t c" style="left: 149.7px; top: 409.4px; font-size: 10.6px; color: rgb(255, 255, 255); font-weight: bold; -webkit-text-stroke: 0px; transform: translateX(-50%) scaleX(1.024);">28</div>
<div class="t c" style="left: 170.8px; top: 409.4px; font-size: 10.6px; color: rgb(255, 255, 255); font-weight: bold; -webkit-text-stroke: 0px; transform: translateX(-50%) scaleX(1.024);">29</div>
<div class="t c" style="left: 192.1px; top: 409.4px; font-size: 10.6px; color: rgb(212, 212, 212); transform: translateX(-50%) scaleX(0.975);">30</div>
<div class="t c" style="left: 65.7px; top: 427.4px; font-size: 10.6px; color: rgb(126, 126, 126); transform: translateX(-50%) scaleX(0.931);">1</div>
<div class="t c" style="left: 86.7px; top: 427.4px; font-size: 10.6px; color: rgb(126, 126, 126); transform: translateX(-50%) scaleX(0.931);">2</div>
<div class="t c" style="left: 107.7px; top: 427.4px; font-size: 10.6px; color: rgb(126, 126, 126); transform: translateX(-50%) scaleX(0.931);">3</div>
<div class="t c" style="left: 128.6px; top: 427.4px; font-size: 10.6px; color: rgb(126, 126, 126); transform: translateX(-50%) scaleX(0.931);">4</div>
<div class="t c" style="left: 149.7px; top: 427.4px; font-size: 10.6px; color: rgb(126, 126, 126); transform: translateX(-50%) scaleX(0.931);">5</div>
<div class="t c" style="left: 170.8px; top: 427.4px; font-size: 10.6px; color: rgb(126, 126, 126); transform: translateX(-50%) scaleX(0.931);">6</div>
<div class="t c" style="left: 192.1px; top: 427.4px; font-size: 10.6px; color: rgb(126, 126, 126); transform: translateX(-50%) scaleX(0.931);">7</div>
<div class="a" style="left:45.0px;top:446.5px;width:170.0px;height:1.0px;background:#343434;"></div>
<div class="t l" style="left: 70px; top: 461.1px; font-size: 12.6px; color: rgb(228, 228, 228); transform: scaleX(0.855);">My Calendars</div>
<div class="a" style="left:61.0px;top:463.0px;width:6.0px;height:8.0px;background:#f0f0f0;"></div>
<div class="a" style="left:43.8px;top:477.5px;width:124.6px;height:17.2px;background:#0c5aa6;"></div>
<svg class="a" style="left:70.3px;top:481.4px;" width="9.4" height="9.4" viewBox="0 0 9 9"><rect x="0.500" y="0.500" width="8" height="8" fill="#5a5a5a" stroke="#b0b0b0"></rect><path d="M2 4.600l1.900 1.900l3.300-4" fill="none" stroke="#fff" stroke-width="1.400"></path></svg>
<div class="t l" style="left: 83.9px; top: 480.9px; font-size: 10.3px; color: rgb(255, 255, 255); font-weight: bold; -webkit-text-stroke: 0px; transform: scaleX(0.803);">Calendar</div>
<div class="t l" style="left: 121px; top: 480.9px; font-size: 10.3px; color: rgb(216, 230, 245); transform: scaleX(0.904);">- Ian.Matth</div>
<div class="a" style="left:70.3px;top:499.5px;width:9.2px;height:9.2px;background:#505050;border:1px solid #8a8a8a;"></div>
<div class="t l" style="left: 83.9px; top: 499px; font-size: 10.3px; color: rgb(233, 233, 233); transform: scaleX(0.843);">United Stat...&nbsp; - Ian.M</div>
<div class="a" style="left:70.3px;top:517.6px;width:9.2px;height:9.2px;background:#505050;border:1px solid #8a8a8a;"></div>
<div class="t l" style="left: 83.9px; top: 517.2px; font-size: 10.3px; color: rgb(233, 233, 233); transform: scaleX(0.848);">Birthdays</div>
<div class="a" style="left:70.3px;top:535.8px;width:9.2px;height:9.2px;background:#505050;border:1px solid #8a8a8a;"></div>
<div class="t l" style="left: 83.9px; top: 535.4px; font-size: 10.3px; color: rgb(233, 233, 233); transform: scaleX(0.84);">Calendar - Online Arc</div>
<div class="a" style="left:70.3px;top:553.8px;width:9.2px;height:9.2px;background:#505050;border:1px solid #8a8a8a;"></div>
<div class="t l" style="left: 83.9px; top: 553.3px; font-size: 10.3px; color: rgb(233, 233, 233); transform: scaleX(0.863);">United Stat...&nbsp; - Onlin</div>
<svg class="a" style="left:46.5px;top:589.0px;" width="8" height="6" viewBox="0 0 8 6"><path d="M0.800 0.800l3.200 3.600l3.200-3.600" fill="none" stroke="#e0e0e0" stroke-width="1.300"></path></svg>
<div class="a" style="left:56.2px;top:588.3px;width:9.2px;height:9.2px;background:#505050;border:1px solid #8a8a8a;"></div>
<div class="t l" style="left: 69.3px; top: 585.2px; font-size: 12.6px; color: rgb(228, 228, 228); transform: scaleX(0.763);">Team Calendars</div>
<div class="a" style="left:70.3px;top:604.9px;width:9.2px;height:9.2px;background:#505050;border:1px solid #8a8a8a;"></div>
<div class="a" style="left:70.3px;top:623.4px;width:9.2px;height:9.2px;background:#505050;border:1px solid #8a8a8a;"></div>
<div class="a" style="left:70.3px;top:641.7px;width:9.2px;height:9.2px;background:#505050;border:1px solid #8a8a8a;"></div>
<div class="a" style="left:70.3px;top:659.9px;width:9.2px;height:9.2px;background:#505050;border:1px solid #8a8a8a;"></div>
<div class="a" style="left:70.3px;top:678.1px;width:9.2px;height:9.2px;background:#505050;border:1px solid #8a8a8a;"></div>
<div class="a" style="left:218.5px;top:137.7px;width:810.0px;height:560.0px;background:#272727;border-top:1px solid #333;"></div>
<div class="a" style="left:218.5px;top:184.5px;width:810.0px;height:520.0px;background:#1b1b1b;"></div>
<div class="a" style="left:218.5px;top:184.5px;width:35.0px;height:78.5px;background:#272727;"></div>
<div class="a" style="left:218.5px;top:263.5px;width:35.5px;height:440.0px;background:#1e1e1e;"></div>
<div class="a" style="left:227.0px;top:153.5px;width:39.0px;height:18.0px;background:#404040;border:1px solid #5c5c5c;border-radius:3px;"></div>
<div class="t c" style="left: 246.5px; top: 157.7px; font-size: 9.8px; color: rgb(240, 240, 240); transform: translateX(-50%) scaleX(0.879);">Today</div>
<div class="a" style="left:269.0px;top:153.5px;width:18.5px;height:18.0px;background:#404040;border:1px solid #5c5c5c;border-radius:3px;"></div>
<div class="a" style="left:290.5px;top:153.5px;width:18.5px;height:18.0px;background:#404040;border:1px solid #5c5c5c;border-radius:3px;"></div>
<svg class="a" style="left:275.5px;top:158.0px;" width="5" height="9" viewBox="0 0 5 9"><path d="M4.300 0.700l-3.500 3.800l3.500 3.800" fill="none" stroke="#e6e6e6" stroke-width="1.300"></path></svg>
<svg class="a" style="left:297.5px;top:158.0px;" width="5" height="9" viewBox="0 0 5 9"><path d="M0.700 0.700l3.500 3.800l-3.500 3.800" fill="none" stroke="#e6e6e6" stroke-width="1.300"></path></svg>
<div class="t l" style="left: 324px; top: 155.2px; font-size: 15.3px; color: rgb(244, 244, 244); transform: scaleX(0.934);">October 13 - 19, 2024</div>
<div class="a" style="left:420.4px;top:263.5px;width:610.0px;height:312.7px;background:#373737;"></div>
<div class="a" style="left:754.5px;top:184.5px;width:167.0px;height:520.0px;background:#13222f;"></div>
<div class="a" style="left:253.6px;top:184.0px;width:780.0px;height:1.0px;background:#0c0c0c;"></div>
<div class="a" style="left:253.6px;top:206.2px;width:780.0px;height:1.0px;background:#0c0c0c;"></div>
<div class="a" style="left:219.5px;top:262.8px;width:810.0px;height:1.2px;background:#070707;"></div>
<div class="a" style="left:253.6px;top:280.1px;width:780.0px;height:1.0px;background:rgba(0,0,0,.22);"></div>
<div class="a" style="left:219.5px;top:297.4px;width:810.0px;height:1.0px;background:#0b0b0b;"></div>
<div class="a" style="left:253.6px;top:314.8px;width:780.0px;height:1.0px;background:rgba(0,0,0,.22);"></div>
<div class="a" style="left:219.5px;top:332.2px;width:810.0px;height:1.0px;background:#0b0b0b;"></div>
<div class="a" style="left:253.6px;top:349.6px;width:780.0px;height:1.0px;background:rgba(0,0,0,.22);"></div>
<div class="a" style="left:219.5px;top:366.9px;width:810.0px;height:1.0px;background:#0b0b0b;"></div>
<div class="a" style="left:253.6px;top:384.3px;width:780.0px;height:1.0px;background:rgba(0,0,0,.22);"></div>
<div class="a" style="left:219.5px;top:401.7px;width:810.0px;height:1.0px;background:#0b0b0b;"></div>
<div class="a" style="left:253.6px;top:419.1px;width:780.0px;height:1.0px;background:rgba(0,0,0,.22);"></div>
<div class="a" style="left:219.5px;top:436.4px;width:810.0px;height:1.0px;background:#0b0b0b;"></div>
<div class="a" style="left:253.6px;top:453.8px;width:780.0px;height:1.0px;background:rgba(0,0,0,.22);"></div>
<div class="a" style="left:219.5px;top:471.2px;width:810.0px;height:1.0px;background:#0b0b0b;"></div>
<div class="a" style="left:253.6px;top:488.6px;width:780.0px;height:1.0px;background:rgba(0,0,0,.22);"></div>
<div class="a" style="left:219.5px;top:505.9px;width:810.0px;height:1.0px;background:#0b0b0b;"></div>
<div class="a" style="left:253.6px;top:523.3px;width:780.0px;height:1.0px;background:rgba(0,0,0,.22);"></div>
<div class="a" style="left:219.5px;top:540.7px;width:810.0px;height:1.0px;background:#0b0b0b;"></div>
<div class="a" style="left:253.6px;top:558.1px;width:780.0px;height:1.0px;background:rgba(0,0,0,.22);"></div>
<div class="a" style="left:219.5px;top:575.5px;width:810.0px;height:1.0px;background:#0b0b0b;"></div>
<div class="a" style="left:253.6px;top:592.8px;width:780.0px;height:1.0px;background:rgba(0,0,0,.22);"></div>
<div class="a" style="left:219.5px;top:610.2px;width:810.0px;height:1.0px;background:#0b0b0b;"></div>
<div class="a" style="left:253.6px;top:627.6px;width:780.0px;height:1.0px;background:rgba(0,0,0,.22);"></div>
<div class="a" style="left:219.5px;top:645.0px;width:810.0px;height:1.0px;background:#0b0b0b;"></div>
<div class="a" style="left:253.6px;top:662.3px;width:780.0px;height:1.0px;background:rgba(0,0,0,.22);"></div>
<div class="a" style="left:219.5px;top:679.7px;width:810.0px;height:1.0px;background:#0b0b0b;"></div>
<div class="a" style="left:253.6px;top:697.1px;width:780.0px;height:1.0px;background:rgba(0,0,0,.22);"></div>
<div class="a" style="left:253.1px;top:184.5px;width:1.0px;height:520.0px;background:#0c0c0c;"></div>
<div class="a" style="left:419.9px;top:184.5px;width:1.0px;height:520.0px;background:#0c0c0c;"></div>
<div class="a" style="left:587.0px;top:184.5px;width:1.0px;height:520.0px;background:#0c0c0c;"></div>
<div class="a" style="left:754.0px;top:184.5px;width:1.0px;height:520.0px;background:#0c0c0c;"></div>
<div class="a" style="left:920.9px;top:184.5px;width:1.0px;height:520.0px;background:#0c0c0c;"></div>
<div class="a" style="left:754.0px;top:184.0px;width:168.0px;height:79.8px;border:1px solid #3f7fb8;"></div>
<div class="a" style="left:753.8px;top:263.5px;width:1.0px;height:440.0px;background:#2b5d8a;"></div>
<div class="t l" style="left: 259.9px; top: 190.4px; font-size: 11.8px; color: rgb(180, 180, 180); transform: scaleX(0.862);">Sunday</div>
<div class="t l" style="left: 259.9px; top: 213px; font-size: 11.8px; color: rgb(180, 180, 180); transform: scaleX(0.876);">13</div>
<div class="t l" style="left: 426.7px; top: 190.4px; font-size: 11.8px; color: rgb(180, 180, 180); transform: scaleX(0.953);">Monday</div>
<div class="t l" style="left: 426.7px; top: 213px; font-size: 11.8px; color: rgb(180, 180, 180); transform: scaleX(0.876);">14</div>
<div class="t l" style="left: 593.8px; top: 190.4px; font-size: 11.8px; color: rgb(180, 180, 180); transform: scaleX(0.881);">Tuesday</div>
<div class="t l" style="left: 593.8px; top: 213px; font-size: 11.8px; color: rgb(180, 180, 180); transform: scaleX(0.876);">15</div>
<div class="t l" style="left: 760.8px; top: 190.4px; font-size: 11.8px; color: rgb(255, 255, 255); font-weight: bold; -webkit-text-stroke: 0px; transform: scaleX(0.915);">Wednesday</div>
<div class="t l" style="left: 760.8px; top: 213px; font-size: 11.8px; color: rgb(255, 255, 255); font-weight: bold; -webkit-text-stroke: 0px; transform: scaleX(0.952);">16</div>
<div class="t l" style="left: 927.7px; top: 190.4px; font-size: 11.8px; color: rgb(180, 180, 180); transform: scaleX(0.899);">Thursday</div>
<div class="t l" style="left: 927.7px; top: 213px; font-size: 11.8px; color: rgb(180, 180, 180); transform: scaleX(0.876);">17</div>
<div class="a" style="left:421.5px;top:229.4px;width:158.9px;height:13.3px;background:#0d5ca6;"></div>
<div class="a" style="left:421.5px;top:229.4px;width:4.8px;height:13.3px;background:#123a5e;border:1px solid #86aed6;"></div>
<div class="t l" style="left: 428.6px; top: 230.1px; font-size: 9.6px; color: rgb(255, 255, 255); transform: scaleX(0.889);">Thanksgiving Day; Canada</div>
<div class="t r" style="left: 247.5px; top: 265.6px; font-size: 9.3px; color: rgb(208, 208, 208); transform: translateX(-100%) scaleX(0.925);">8 AM</div>
<div class="t r" style="left: 247.5px; top: 300.4px; font-size: 9.3px; color: rgb(208, 208, 208); transform: translateX(-100%) scaleX(0.925);">9 AM</div>
<div class="t r" style="left: 247.5px; top: 335.1px; font-size: 9.3px; color: rgb(208, 208, 208); transform: translateX(-100%) scaleX(0.888);">10 AM</div>
<div class="t r" style="left: 247.5px; top: 369.9px; font-size: 9.3px; color: rgb(208, 208, 208); transform: translateX(-100%) scaleX(0.912);">11 AM</div>
<div class="t r" style="left: 247.5px; top: 404.6px; font-size: 9.3px; color: rgb(208, 208, 208); transform: translateX(-100%) scaleX(0.871);">12 PM</div>
<div class="t r" style="left: 247.5px; top: 439.4px; font-size: 9.3px; color: rgb(208, 208, 208); transform: translateX(-100%) scaleX(0.903);">1 PM</div>
<div class="t r" style="left: 247.5px; top: 474.1px; font-size: 9.3px; color: rgb(208, 208, 208); transform: translateX(-100%) scaleX(0.903);">2 PM</div>
<div class="t r" style="left: 247.5px; top: 508.9px; font-size: 9.3px; color: rgb(208, 208, 208); transform: translateX(-100%) scaleX(0.903);">3 PM</div>
<div class="t r" style="left: 247.5px; top: 543.6px; font-size: 9.3px; color: rgb(208, 208, 208); transform: translateX(-100%) scaleX(0.903);">4 PM</div>
<div class="t r" style="left: 247.5px; top: 578.4px; font-size: 9.3px; color: rgb(208, 208, 208); transform: translateX(-100%) scaleX(0.903);">5 PM</div>
<div class="t r" style="left: 247.5px; top: 613.1px; font-size: 9.3px; color: rgb(208, 208, 208); transform: translateX(-100%) scaleX(0.903);">6 PM</div>
<div class="t r" style="left: 247.5px; top: 647.9px; font-size: 9.3px; color: rgb(208, 208, 208); transform: translateX(-100%) scaleX(0.903);">7 PM</div>
<div class="t r" style="left: 247.5px; top: 682.6px; font-size: 9.3px; color: rgb(208, 208, 208); transform: translateX(-100%) scaleX(0.903);">8 PM</div>
<div class="a" style="left:597px;top:263.800px;width:430px;height:68px;overflow:hidden;background:#272727">
<div class="a" style="left:0;top:0;width:430px;height:27px;background:linear-gradient(#343434,#2e2e2e)"></div>
<div class="a" style="left:138px;top:2.500px;width:172px;height:19px;background:#1762ac;filter:blur(3px);transform:skewX(-42deg)"></div>
<div class="a" style="left:-10px;top:28.500px;width:450px;height:28.500px;background:repeating-linear-gradient(166deg,#1c66b2 0 2.500px,#3383d0 2.500px 3.800px,#1a5ea6 3.800px 6px,#2470be 6px 7.500px),#1c66b2;filter:blur(1.800px)"></div>
<div class="a" style="left:143px;top:26px;width:14px;height:36px;background:#262626;filter:blur(4px);opacity:.5;transform:skewX(-40deg)"></div>
<div class="a" style="left:312px;top:26px;width:12px;height:36px;background:#262626;filter:blur(4px);opacity:.5;transform:skewX(-40deg)"></div>
<div class="a" style="left:-8px;top:14px;width:24px;height:60px;background:linear-gradient(90deg,#e4e4e4 30%,rgba(200,200,200,0));filter:blur(3px)"></div>
<div class="a" style="left:0;top:58px;width:430px;height:12px;background:linear-gradient(rgba(40,40,40,0),#2a2a2a)"></div>
</div>
<div class="a" style="left:917.500px;top:657px;width:110px;height:40px;overflow:hidden;background:#1d4e80">
<div class="a" style="left:-10px;top:-10px;width:140px;height:60px;background:repeating-linear-gradient(158deg,#2a5f96 0 4px,#4a82b8 4px 6px,#1d4a7c 6px 9px,#34699f 9px 11px);filter:blur(1.500px)"></div>
</div>
<div class="a" style="left:167.0px;top:375.5px;width:135.5px;height:291.0px;background:#2b2b2b;border:1px solid #505050;box-shadow:0 2px 6px rgba(0,0,0,.6);"></div>
<div class="t l" style="left: 197.4px; top: 382.4px; font-size: 10.7px; color: rgb(242, 242, 242); transform: scaleX(0.85);">Open in New <u>W</u>indow</div>
<div class="a" style="left:193.5px;top:399.5px;width:108.0px;height:1.0px;background:#464646;"></div>
<div class="t l" style="left: 197.4px; top: 406px; font-size: 10.7px; color: rgb(242, 242, 242); transform: scaleX(0.815);"><u>N</u>ew Calendar...</div>
<div class="a" style="left:193.5px;top:422.5px;width:108.0px;height:1.0px;background:#464646;"></div>
<div class="t l" style="left: 197.4px; top: 429.1px; font-size: 10.7px; color: rgb(110, 110, 110); transform: scaleX(0.805);"><u>H</u>ide This Calendar</div>
<div class="t l" style="left: 197.4px; top: 450.6px; font-size: 10.7px; color: rgb(110, 110, 110); transform: scaleX(0.803);"><u>O</u>verlay</div>
<div class="t l" style="left: 197.4px; top: 471.4px; font-size: 10.7px; color: rgb(242, 242, 242); transform: scaleX(0.842);"><u>C</u>olor</div>
<svg class="a" style="left:291.0px;top:472.5px;" width="5" height="9" viewBox="0 0 5 9"><path d="M0.700 0.700l3.500 3.800l-3.500 3.800" fill="none" stroke="#e6e6e6" stroke-width="1.200"></path></svg>
<div class="a" style="left:193.5px;top:488.0px;width:108.0px;height:1.0px;background:#464646;"></div>
<div class="t l" style="left: 197.4px; top: 494.5px; font-size: 10.7px; color: rgb(110, 110, 110); transform: scaleX(0.799);"><u>R</u>ename Calendar</div>
<div class="t l" style="left: 197.4px; top: 515.8px; font-size: 10.7px; color: rgb(242, 242, 242); transform: scaleX(0.821);"><u>C</u>opy Calendar</div>
<div class="t l" style="left: 197.4px; top: 537.2px; font-size: 10.7px; color: rgb(110, 110, 110); transform: scaleX(0.822);"><u>M</u>ove Calendar</div>
<div class="t l" style="left: 197.4px; top: 558.2px; font-size: 10.7px; color: rgb(110, 110, 110); transform: scaleX(0.803);"><u>D</u>elete Calendar</div>
<div class="a" style="left:193.5px;top:575.3px;width:108.0px;height:1.0px;background:#464646;"></div>
<div class="t l" style="left: 197.4px; top: 581.8px; font-size: 10.7px; color: rgb(110, 110, 110); transform: scaleX(0.827);">Move <u>U</u>p</div>
<div class="t l" style="left: 197.4px; top: 602.6px; font-size: 10.7px; color: rgb(242, 242, 242); transform: scaleX(0.843);">Move D<u>o</u>wn</div>
<div class="a" style="left:193.5px;top:619.3px;width:108.0px;height:1.0px;background:#464646;"></div>
<div class="t l" style="left: 197.4px; top: 626.4px; font-size: 10.7px; color: rgb(242, 242, 242); transform: scaleX(0.806);"><u>S</u>haring Permissions...</div>
<div class="a" style="left:193.5px;top:643.5px;width:108.0px;height:1.0px;background:#464646;"></div>
<div class="t l" style="left: 197.4px; top: 649.5px; font-size: 10.7px; color: rgb(242, 242, 242); transform: scaleX(0.795);"><u>P</u>roperties...</div>
<svg class="a" style="left:178.0px;top:381.8px;" width="12" height="12" viewBox="0 0 12 12"><path d="M0.500 1.700h11v9.800h-11z M0.500 4.200h11" fill="none" stroke="#d6d6d6"></path><path d="M3 0v2M9 0v2" stroke="#d6d6d6" stroke-width="1.200"></path><rect x="0" y="0" width="5" height="5.500" fill="#2b2b2b"></rect><path d="M2.500 0v5M0 2.500h5" stroke="#3fb868" stroke-width="1.200"></path></svg>
<svg class="a" style="left:178.0px;top:405.0px;" width="12" height="12" viewBox="0 0 12 12"><path d="M0.500 1.700h11v9.800h-11z M0.500 4.200h11" fill="none" stroke="#d6d6d6"></path><path d="M3 0v2M9 0v2" stroke="#d6d6d6" stroke-width="1.200"></path></svg>
<svg class="a" style="left:178.0px;top:449.4px;" width="12" height="12" viewBox="0 0 12 12"><path d="M0.500 1.500h9v8h-9z M0.500 3.700h9" fill="none" stroke="#707070"></path><path d="M2.500 0v1.500M7.500 0v1.500" stroke="#707070"></path><path d="M2.500 3.500h9v8h-9z" fill="#2b2b2b" stroke="#707070"></path><path d="M2.500 5.700h9" stroke="#707070"></path></svg>
<svg class="a" style="left:177.5px;top:469.5px;" width="13" height="13" viewBox="0 0 13 13"><circle cx="6.500" cy="6" r="5" fill="none" stroke="#d6d6d6"></circle><circle cx="4.500" cy="4.500" r="1" fill="#e5574c"></circle><circle cx="7.500" cy="3.500" r="1" fill="#f2b53a"></circle><circle cx="9" cy="6" r="1" fill="#4bb36b"></circle><rect x="0" y="10.500" width="13" height="2.500" fill="#2f8fe6"></rect><path d="M2 8.500c1.500-1.500 3-1 3.500 1.500" fill="none" stroke="#d6d6d6"></path></svg>
<svg class="a" style="left:178.0px;top:493.5px;" width="13" height="12" viewBox="0 0 13 12"><path d="M0.500 1.500h4l1 1.500h5v2 M0.500 1.500v9h6" fill="none" stroke="#707070"></path><path d="M9 5.500h3M10.500 5.500v6M9 11.500h3" stroke="#707070" fill="none"></path></svg>
<svg class="a" style="left:178.0px;top:514.5px;" width="13" height="13" viewBox="0 0 13 13"><path d="M0.500 0.500h7v6h-7z M0.500 2.500h7" fill="none" stroke="#d6d6d6"></path><rect x="4.500" y="5.500" width="8" height="7" fill="#2b2b2b" stroke="#d6d6d6"></rect><path d="M4.500 7.500h8" stroke="#d6d6d6"></path></svg>
<svg class="a" style="left:178.0px;top:536.0px;" width="13" height="12" viewBox="0 0 13 12"><path d="M0.500 1.500h4l1 1.500h6v4 M0.500 1.500v9h7" fill="none" stroke="#707070"></path><path d="M8 9.500h4.500M10.500 7.500l2 2l-2 2" stroke="#707070" fill="none"></path></svg>
<svg class="a" style="left:178.0px;top:557.0px;" width="13" height="12" viewBox="0 0 13 12"><path d="M0.500 1.500h4l1 1.500h6v3 M0.500 1.500v9h7" fill="none" stroke="#707070"></path><path d="M8.500 7.500l4 4M12.500 7.500l-4 4" stroke="#707070" fill="none"></path></svg>
<svg class="a" style="left:179.5px;top:584.0px;" width="9" height="6" viewBox="0 0 9 6"><path d="M0.700 5l3.800-4l3.800 4" fill="none" stroke="#707070" stroke-width="1.200"></path></svg>
<svg class="a" style="left:179.5px;top:605.0px;" width="9" height="6" viewBox="0 0 9 6"><path d="M0.700 1l3.800 4l3.800-4" fill="none" stroke="#3b8ee0" stroke-width="1.300"></path></svg>
<svg class="a" style="left:178.0px;top:625.0px;" width="13" height="13" viewBox="0 0 13 13"><path d="M0.500 1.500h4l1 1.500h6v3 M0.500 1.500v9h5" fill="none" stroke="#d6d6d6"></path><circle cx="7" cy="9" r="1.600" fill="none" stroke="#3b8ee0"></circle><circle cx="11" cy="7" r="1.300" fill="none" stroke="#3b8ee0"></circle><circle cx="11" cy="11.300" r="1.300" fill="none" stroke="#3b8ee0"></circle><path d="M8.400 8.300l1.500-0.800M8.400 9.700l1.500 1" stroke="#3b8ee0"></path></svg>
<svg class="a" style="left:179.5px;top:648.0px;" width="9" height="13" viewBox="0 0 9 13"><rect x="0.500" y="0.500" width="8" height="12" fill="none" stroke="#d6d6d6"></rect><path d="M2.500 3.500h1M2.500 6.500h1M2.500 9.500h1M5 3.500h1.500M5 6.500h1.500M5 9.500h1.500" stroke="#d6d6d6"></path></svg>
<div class="a" style="left:305.0px;top:283.3px;width:293.0px;height:402.5px;background:#f0f0f0;box-shadow:0 0 0 1px rgba(90,90,90,.55),0 3px 12px rgba(0,0,0,.5);"></div>
<div class="a" style="left:305.0px;top:283.3px;width:293.0px;height:23.0px;background:#ffffff;"></div>
<div class="t l" style="left: 311.3px; top: 290.1px; font-size: 10.3px; color: rgb(141, 141, 141); transform: scaleX(0.841);">Calendar Properties</div>
<svg class="a" style="left:582.0px;top:290.5px;" width="8" height="8" viewBox="0 0 8 8"><path d="M0.500 0.500l7 7M7.500 0.500l-7 7" stroke="#8a8a8a" stroke-width="1" fill="none"></path></svg>
<div class="a" style="left:310.0px;top:327.5px;width:300.0px;height:330.0px;background:#ffffff;border:1px solid #d4d4d4;"></div>
<div class="a" style="left:311.5px;top:313.5px;width:41.0px;height:14.5px;background:#f0f0f0;border:1px solid #d4d4d4;border-bottom:none;"></div>
<div class="a" style="left:405.0px;top:313.5px;width:70.0px;height:14.5px;background:#f0f0f0;border:1px solid #d4d4d4;border-bottom:none;"></div>
<div class="a" style="left:352.0px;top:311.0px;width:54.0px;height:17.5px;background:#ffffff;border:1px solid #d4d4d4;border-bottom:none;"></div>
<div class="t l" style="left: 315.4px; top: 316.2px; font-size: 9.8px; color: rgb(30, 30, 30); transform: scaleX(0.878);">General</div>
<div class="t l" style="left: 355.7px; top: 314.6px; font-size: 9.8px; color: rgb(30, 30, 30); transform: scaleX(0.815);">Permissions</div>
<div class="t l" style="left: 409.6px; top: 316.2px; font-size: 9.8px; color: rgb(30, 30, 30); transform: scaleX(0.884);">Synchronization</div>
<div class="a" style="left:317.2px;top:338.7px;width:300.0px;height:138.0px;border:1px solid #dcdcdc;"></div>
<div class="a" style="left:322.5px;top:333.0px;width:91.0px;height:11.0px;background:#ffffff;"></div>
<div class="t l" style="left: 324.3px; top: 333.9px; font-size: 9.8px; color: rgb(30, 30, 30); transform: scaleX(0.9);">Currently sharing with:</div>
<div class="a" style="left:324.3px;top:349.0px;width:290.0px;height:97.3px;background:#ffffff;border:1px solid #8c8c8c;"></div>
<div class="a" style="left:325.3px;top:368.3px;width:288.0px;height:14.0px;background:#e6e6e6;"></div>
<div class="a" style="left:395.6px;top:350.0px;width:1.0px;height:17.5px;background:#e2e2e2;"></div>
<div class="t l" style="left: 329.6px; top: 354.6px; font-size: 9.8px; color: rgb(30, 30, 30); transform: scaleX(0.819);">Name</div>
<div class="t l" style="left: 400.7px; top: 354.6px; font-size: 9.8px; color: rgb(30, 30, 30); transform: scaleX(0.838);">Permission Level</div>
<div class="t l" style="left: 329.6px; top: 370.4px; font-size: 9.8px; color: rgb(30, 30, 30); transform: scaleX(0.905);">My Organization</div>
<div class="t l" style="left: 400.7px; top: 370.4px; font-size: 9.8px; color: rgb(30, 30, 30); transform: scaleX(0.88);">Can view when I'm busy</div>
<div class="a" style="left:467.3px;top:455.0px;width:47.4px;height:15.4px;background:#e1e1e1;border:1px solid #adadad;"></div>
<div class="t c" style="left: 493.2px; top: 458.2px; font-size: 9.8px; color: rgb(30, 30, 30); transform: translateX(-50%) scaleX(0.871);">Add...</div>
<div class="a" style="left:530.4px;top:455.0px;width:47.4px;height:15.4px;background:#cccccc;border:1px solid #bfbfbf;"></div>
<div class="t l" style="left: 542px; top: 458.2px; font-size: 9.8px; color: rgb(143, 143, 143); transform: scaleX(0.678);">Re</div>
<div class="a" style="left:317.2px;top:479.0px;width:300.0px;height:121.5px;border:1px solid #dcdcdc;"></div>
<div class="a" style="left:322.5px;top:473.5px;width:48.0px;height:11.0px;background:#ffffff;"></div>
<div class="t l" style="left: 324px; top: 474.2px; font-size: 9.8px; color: rgb(30, 30, 30); transform: scaleX(0.83);">Permissions</div>
<div class="t l" style="left: 324px; top: 495.7px; font-size: 9.8px; color: rgb(30, 30, 30); transform: scaleX(0.888);">Changes you make to these permissions will apply to all us</div>
<div class="t l" style="left: 324px; top: 506px; font-size: 9.8px; color: rgb(30, 30, 30); transform: scaleX(0.915);">your organization.</div>
<svg class="a" style="left:324.1px;top:527.8px;" width="9.6" height="9.6" viewBox="0 0 10 10"><circle cx="5" cy="5" r="4.300" fill="#fff" stroke="#333" stroke-width="0.900"></circle></svg>
<div class="t l" style="left: 336px; top: 527.8px; font-size: 9.8px; color: rgb(30, 30, 30); transform: scaleX(0.892);">None</div>
<svg class="a" style="left:324.1px;top:542.2px;" width="9.6" height="9.6" viewBox="0 0 10 10"><circle cx="5" cy="5" r="4.300" fill="#fff" stroke="#333" stroke-width="0.900"></circle><circle cx="5" cy="5" r="2.300" fill="#222"></circle></svg>
<div class="t l" style="left: 336px; top: 542.2px; font-size: 9.8px; color: rgb(30, 30, 30); transform: scaleX(0.881);">Can view when I'm busy</div>
<svg class="a" style="left:324.1px;top:556.7px;" width="9.6" height="9.6" viewBox="0 0 10 10"><circle cx="5" cy="5" r="4.300" fill="#fff" stroke="#333" stroke-width="0.900"></circle></svg>
<div class="t l" style="left: 336px; top: 556.7px; font-size: 9.8px; color: rgb(30, 30, 30); transform: scaleX(0.893);">Can view titles and locations</div>
<svg class="a" style="left:324.1px;top:571.2px;" width="9.6" height="9.6" viewBox="0 0 10 10"><circle cx="5" cy="5" r="4.300" fill="#fff" stroke="#333" stroke-width="0.900"></circle></svg>
<div class="t l" style="left: 336px; top: 571.2px; font-size: 9.8px; color: rgb(30, 30, 30); transform: scaleX(0.876);">Can view all details</div>
<svg class="a" style="left:324.1px;top:585.6px;" width="9.6" height="9.6" viewBox="0 0 10 10"><circle cx="5" cy="5" r="4.300" fill="#fff" stroke="#333" stroke-width="0.900"></circle></svg>
<div class="t l" style="left: 336px; top: 585.6px; font-size: 9.8px; color: rgb(30, 30, 30); transform: scaleX(0.879);">Can edit</div>
<div class="a" style="left:415.6px;top:664.9px;width:53.9px;height:14.5px;background:#e1e1e1;border:1px solid #adadad;"></div>
<div class="t c" style="left: 442.6px; top: 667.5px; font-size: 9.8px; color: rgb(30, 30, 30); transform: translateX(-50%) scaleX(0.742);">OK</div>
<div class="a" style="left:476.6px;top:664.9px;width:53.9px;height:14.5px;background:#e1e1e1;border:1px solid #adadad;"></div>
<div class="t c" style="left: 503.6px; top: 667.5px; font-size: 9.8px; color: rgb(30, 30, 30); transform: translateX(-50%) scaleX(0.852);">Cancel</div>
<div class="a" style="left:537.6px;top:664.9px;width:53.9px;height:14.5px;background:#cccccc;border:1px solid #bfbfbf;"></div>
<div class="t c" style="left: 564.6px; top: 667.5px; font-size: 9.8px; color: rgb(143, 143, 143); transform: translateX(-50%) scaleX(0.901);">Apply</div>
<div class="a" style="left:552.0px;top:330.0px;width:480.0px;height:327.3px;background:#f0f0f0;box-shadow:0 0 0 1px rgba(120,120,120,.6),0 3px 12px rgba(0,0,0,.45);"></div>
<div class="a" style="left:552.0px;top:330.0px;width:480.0px;height:23.0px;background:#ffffff;"></div>
<div class="t l" style="left: 559px; top: 336.6px; font-size: 10.3px; color: rgb(141, 141, 141); transform: scaleX(0.819);">Add Users</div>
<svg class="a" style="left:1009.6px;top:337.6px;" width="8" height="8" viewBox="0 0 8 8"><path d="M0.500 0.500l7 7M7.500 0.500l-7 7" stroke="#8a8a8a" stroke-width="1" fill="none"></path></svg>
<div class="t l" style="left: 561.5px; top: 359.6px; font-size: 9.8px; color: rgb(17, 17, 17); font-weight: bold; -webkit-text-stroke: 0px; transform: scaleX(0.776);">Search:</div>
<svg class="a" style="left:596.1px;top:359.6px;" width="9.6" height="9.6" viewBox="0 0 10 10"><circle cx="5" cy="5" r="4.300" fill="#fff" stroke="#333" stroke-width="0.900"></circle><circle cx="5" cy="5" r="2.300" fill="#222"></circle></svg>
<div class="t l" style="left: 608.5px; top: 359.6px; font-size: 9.8px; color: rgb(30, 30, 30); transform: scaleX(0.878);">All columns</div>
<svg class="a" style="left:662.6px;top:359.6px;" width="9.6" height="9.6" viewBox="0 0 10 10"><circle cx="5" cy="5" r="4.300" fill="#fff" stroke="#333" stroke-width="0.900"></circle></svg>
<div class="t l" style="left: 675px; top: 359.6px; font-size: 9.8px; color: rgb(30, 30, 30); transform: scaleX(0.867);">Name only</div>
<div class="t l" style="left: 755.8px; top: 359.6px; font-size: 9.8px; color: rgb(17, 17, 17); font-weight: bold; -webkit-text-stroke: 0px; transform: scaleX(0.802);">Address Book:</div>
<div class="a" style="left:561.5px;top:373.8px;width:144.0px;height:14.8px;background:#ffffff;border:1px solid #adadad;"></div>
<div class="a" style="left:707.5px;top:373.8px;width:19.5px;height:15.2px;background:#cccccc;border:1px solid #c4c4c4;"></div>
<div class="t c" style="left:717.2px;top:377.0px;font-size:9px;color:#8f8f8f;">→</div>
<div class="a" style="left:729.0px;top:373.8px;width:18.6px;height:15.2px;background:#cccccc;border:1px solid #c4c4c4;"></div>
<svg class="a" style="left:735.0px;top:378.0px;" width="6.5" height="6.5" viewBox="0 0 6.500 6.500"><path d="M0.500 0.500l5.500 5.500M6 0.500l-5.500 5.500" stroke="#9a9a9a" stroke-width="0.900" fill="none"></path></svg>
<div class="a" style="left:755.3px;top:374.6px;width:182.4px;height:14.0px;background:#ffffff;border:1px solid #8a8a8a;"></div>
<div class="a" style="left:757px;top:376px;width:164px;height:11px;overflow:hidden;background:#dcdcdc"><div class="a" style="left:-10px;top:-6px;width:190px;height:24px;background:repeating-linear-gradient(160deg,#d2d2d2 0 3px,#e8e8e8 3px 5px,#cdcdcd 5px 8px);filter:blur(1.200px)"></div></div>
<svg class="a" style="left:927.5px;top:380.0px;" width="7" height="4.5" viewBox="0 0 7 4.500"><path d="M0.500 0.500l3 3l3-3" fill="none" stroke="#444" stroke-width="1"></path></svg>
<div class="t c" style="left:923.0px;top:378.6px;font-size:7px;color:#333;">›</div>
<div class="t l" style="left: 951.9px; top: 376.9px; font-size: 9.8px; color: rgb(42, 111, 201); transform: scaleX(0.874);">Advanced Find</div>
<div class="a" style="left:561.5px;top:396.2px;width:454.0px;height:14.6px;background:#ffffff;border:1px solid #a8a8a8;"></div>
<div class="a" style="left:708.8px;top:397.2px;width:1.0px;height:12.6px;background:#e0e0e0;"></div>
<div class="a" style="left:821.9px;top:397.2px;width:1.0px;height:12.6px;background:#e0e0e0;"></div>
<div class="a" style="left:912.6px;top:397.2px;width:1.0px;height:12.6px;background:#e0e0e0;"></div>
<div class="a" style="left:1004.0px;top:397.2px;width:1.0px;height:12.6px;background:#e0e0e0;"></div>
<div class="t l" style="left: 567.9px; top: 399.5px; font-size: 9.8px; color: rgb(30, 30, 30); transform: scaleX(0.819);">Name</div>
<div class="t l" style="left: 713.9px; top: 399.5px; font-size: 9.8px; color: rgb(30, 30, 30); transform: scaleX(0.881);">Title</div>
<div class="t l" style="left: 827.5px; top: 399.5px; font-size: 9.8px; color: rgb(30, 30, 30); transform: scaleX(0.843);">Business Phone</div>
<div class="t l" style="left: 917.6px; top: 399.5px; font-size: 9.8px; color: rgb(30, 30, 30); transform: scaleX(0.891);">Location</div>
<div class="t l" style="left: 1008.5px; top: 399.5px; font-size: 9.8px; color: rgb(30, 30, 30); transform: scaleX(0.777);">D</div>
<div class="a" style="left:561.5px;top:413.2px;width:454.0px;height:199.0px;background:#ffffff;border:1px solid #a8a8a8;"></div>
<div class="a" style="left:564.500px;top:414px;width:138px;height:179.500px;overflow:hidden">
<div class="a" style="left:-20px;top:-10px;width:190px;height:205px;background:repeating-linear-gradient(153deg,rgba(255,255,255,0) 0 5px,rgba(255,255,255,.55) 5px 7px,rgba(255,255,255,0) 7px 13px,rgba(150,150,150,.35) 13px 16px,rgba(255,255,255,0) 16px 23px),repeating-linear-gradient(158deg,#c4c4c4 0 3px,#e6e6e6 3px 5px,#bababa 5px 8px,#eeeeee 8px 9.500px,#cdcdcd 9.500px 12px);filter:blur(1.600px)"></div>
<div class="a" style="left:0;top:-1px;width:140px;height:182px;background:repeating-linear-gradient(180deg,rgba(255,255,255,.34) 0 2px,rgba(255,255,255,0) 3.500px 10.800px,rgba(255,255,255,.34) 12.800px);filter:blur(.8px)"></div>
<div class="a" style="left:116px;top:26px;width:40px;height:10px;background:#fff;filter:blur(3px)"></div>
<div class="a" style="left:38px;top:64px;width:70px;height:9px;background:rgba(255,255,255,.85);filter:blur(4px)"></div>
<div class="a" style="left:100px;top:62px;width:50px;height:13px;background:#fff;filter:blur(3px)"></div>
<div class="a" style="left:121px;top:76px;width:40px;height:25px;background:#fff;filter:blur(3.500px)"></div>
<div class="a" style="left:62px;top:129px;width:40px;height:9px;background:rgba(255,255,255,.7);filter:blur(4px)"></div>
<div class="a" style="left:95px;top:127px;width:60px;height:13px;background:#fff;filter:blur(3px)"></div>
<div class="a" style="left:121px;top:140px;width:40px;height:12px;background:#fff;filter:blur(3.500px)"></div>
</div>
<div class="a" style="left:1002.2px;top:414.2px;width:12.3px;height:185.0px;background:#f0f0f0;"></div>
<svg class="a" style="left:1005.0px;top:420.0px;" width="6" height="4.5" viewBox="0 0 6 4.500"><path d="M0.500 4l2.500-3l2.500 3" fill="none" stroke="#444" stroke-width="1.300"></path></svg>
<svg class="a" style="left:1005.0px;top:590.0px;" width="6" height="4.5" viewBox="0 0 6 4.500"><path d="M0.500 0.500l2.500 3l2.500-3" fill="none" stroke="#444" stroke-width="1.300"></path></svg>
<div class="a" style="left:1002.7px;top:441.4px;width:10.7px;height:11.4px;background:#cdcdcd;"></div>
<div class="a" style="left:562.5px;top:599.4px;width:452.0px;height:11.7px;background:#f0f0f0;"></div>
<div class="a" style="left:576.0px;top:599.9px;width:219.0px;height:10.3px;background:#cdcdcd;"></div>
<svg class="a" style="left:567.0px;top:602.5px;" width="4.5" height="6" viewBox="0 0 4.500 6"><path d="M4 0.500l-3 2.500l3 2.500" fill="none" stroke="#444" stroke-width="1.300"></path></svg>
<svg class="a" style="left:993.0px;top:602.5px;" width="4.5" height="6" viewBox="0 0 4.500 6"><path d="M0.500 0.500l3 2.500l-3 2.500" fill="none" stroke="#444" stroke-width="1.300"></path></svg>
<div class="a" style="left:562.3px;top:616.4px;width:54.6px;height:15.0px;background:#e1e1e1;border:1px solid #adadad;"></div>
<div class="t c" style="left: 589.6px; top: 619.2px; font-size: 9.8px; color: rgb(30, 30, 30); transform: translateX(-50%) scaleX(0.906);">Add</div>
<div class="a" style="left:625.0px;top:615.4px;width:390.5px;height:14.0px;background:#ffffff;border:1px solid #adadad;"></div>
<div class="a" style="left:896.0px;top:635.4px;width:56.0px;height:15.3px;background:#cccccc;border:1px solid #c4c4c4;"></div>
<div class="t c" style="left: 924.2px; top: 638.4px; font-size: 9.8px; color: rgb(143, 143, 143); transform: translateX(-50%) scaleX(0.756);">OK</div>
<div class="a" style="left:960.0px;top:635.4px;width:55.0px;height:15.3px;background:#e1e1e1;border:1px solid #adadad;"></div>
<div class="t c" style="left: 987.3px; top: 638.4px; font-size: 9.8px; color: rgb(30, 30, 30); transform: translateX(-50%) scaleX(0.82);">Cancel</div>
<div class="a" style="left:82.500px;top:588px;width:85px;height:110px;overflow:hidden;background:#2c2c2c">
<div class="a" style="left:-30px;top:-30px;width:160px;height:180px;background:repeating-linear-gradient(147deg,rgba(0,0,0,0) 0 6px,rgba(110,110,110,.35) 6px 8.500px,rgba(0,0,0,0) 8.500px 15px,rgba(0,0,0,.3) 15px 19px,rgba(0,0,0,0) 19px 27px),repeating-linear-gradient(152deg,#272727 0 3.500px,#434343 3.500px 5.500px,#2b2b2b 5.500px 9px,#3a3a3a 9px 10.500px);filter:blur(1.500px)"></div>
<div class="a" style="left:72px;top:40px;width:14px;height:22px;background:rgba(120,105,20,.28);filter:blur(5px)"></div>
</div>
<div class="a" style="left:0.0px;top:690.8px;width:1024.0px;height:1.2px;background:#cfcfcf;"></div>
<svg class="a" style="left:0;top:0" width="1024" height="692" viewBox="0 0 1024 692"><g fill="none" stroke="#f9d50b" stroke-linecap="round" stroke-linejoin="round"><rect x="2.9" y="73.1" width="25.1" height="27.2" rx="8" ry="8" stroke-width="5.8"></rect><rect x="53.8" y="474.4" width="114.4" height="23.6" rx="9" ry="9" stroke-width="6.4"></rect><rect x="172.6" y="617.9" width="120.2" height="25.1" rx="9" ry="9" stroke-width="6"></rect><rect x="352.8" y="308.4" width="53.5" height="21.3" rx="8.5" ry="8.5" stroke-width="6"></rect><rect x="464.3" y="454.2" width="54.0" height="19.7" rx="9.5" ry="9.5" stroke-width="6"></rect><rect x="320.4" y="540.5" width="134.0" height="58.6" rx="9" ry="9" stroke-width="6.4"></rect><path stroke-width="4.7" d="M21.0 103.3 C23.0 105.5 29.5 112.1 33.2 116.7 C36.9 121.3 40.3 126.3 43.4 131.1 C46.5 135.9 49.4 140.8 52.0 145.6 C54.6 150.4 57.3 155.2 59.2 160.0 C61.1 164.8 62.5 169.7 63.6 174.5 C64.7 179.3 65.7 184.1 65.8 188.9 C65.9 193.7 65.0 198.6 64.3 203.1 C63.6 207.6 62.6 211.5 61.4 216.1 C60.2 220.7 58.7 225.8 57.1 230.6 C55.5 235.4 53.7 240.2 52.0 245.0 C50.3 249.8 48.9 253.7 47.0 259.5 C45.1 265.3 42.8 274.1 40.5 280.0 C38.2 285.9 35.6 288.1 33.2 295.0 C30.8 301.9 28.1 310.8 26.0 321.6 C23.9 332.4 21.4 347.9 20.8 360.0 C20.2 372.1 20.5 383.2 22.5 394.5 C24.5 405.8 30.3 420.4 33.0 428.0 C35.7 435.6 36.5 435.2 38.8 440.0 C41.1 444.8 44.2 451.3 47.0 457.0 C49.8 462.7 54.1 471.2 55.5 474.0"></path><path stroke-width="4.8" d="M40.3 468.9 L55.5 474 L61.4 459.5"></path><path stroke-width="4.8" d="M132.8 499.8 C134.0 501.4 138.3 505.2 140.2 509.7 C142.1 514.2 144.2 521.2 144.4 526.9 C144.6 532.6 143.3 537.9 141.4 544.0 C139.5 550.1 134.9 557.6 132.8 563.7 C130.8 569.9 129.1 575.6 129.1 580.9 C129.1 586.2 129.9 590.3 132.8 595.6 C135.7 600.9 141.8 608.5 146.3 612.9 C150.8 617.3 156.1 620.1 160.0 622.0 C163.9 623.9 168.3 624.1 170.0 624.5"></path><path stroke-width="4.8" d="M164.8 610.6 L170.3 624.5 L155.5 630.2"></path><path stroke-width="4.6" d="M264.8 615.0 C266.9 611.7 274.4 601.2 277.3 595.0 C280.2 588.8 280.9 584.5 282.5 577.8 C284.1 571.1 286.1 561.3 287.0 555.0 C287.9 548.7 288.5 545.8 288.0 540.0 C287.5 534.2 285.7 528.0 284.0 520.0 C282.3 512.0 280.1 502.4 277.9 492.0 C275.7 481.6 273.7 470.9 271.0 457.4 C268.3 443.9 264.1 426.6 261.7 411.2 C259.3 395.8 257.7 375.9 256.5 365.0 C255.3 354.1 254.3 352.9 254.5 346.0 C254.7 339.1 255.3 329.9 257.5 323.8 C259.7 317.8 262.9 313.2 267.6 309.7 C272.4 306.2 279.7 303.6 286.0 302.8 C292.3 302.0 298.2 303.8 305.2 304.8 C312.2 305.8 320.5 307.6 328.0 309.0 C335.5 310.4 346.3 312.7 350.0 313.4"></path><path stroke-width="4.6" d="M340.8 300.9 L351 313.6 L335.7 321.2"></path><path stroke-width="4.5" d="M408.7 329.7 C414.5 329.9 430.4 330.2 443.4 330.6 C456.4 331.0 475.5 331.3 486.7 332.3 C497.9 333.3 504.8 334.5 510.6 336.7 C516.4 338.9 519.4 342.1 521.4 345.4 C523.4 348.6 523.6 351.5 522.5 356.2 C521.4 360.9 519.4 367.0 514.9 373.5 C510.4 380.0 501.5 388.0 495.4 395.2 C489.2 402.4 482.1 410.0 478.0 416.9 C473.9 423.8 471.9 430.9 470.5 436.4 C469.1 441.9 469.6 447.7 469.4 450.0"></path><path stroke-width="4.5" d="M457.5 441.8 L469.4 450.6 L480.2 441.8"></path><path stroke-width="3.8" d="M522.5 457.0 C523.4 455.0 525.9 450.6 527.9 445.0 C529.9 439.4 532.4 428.5 534.4 423.4 C536.4 418.3 537.8 416.4 540.0 414.2 C542.2 412.0 544.1 411.6 547.4 410.4 C550.7 409.2 556.2 407.6 560.0 407.1 C563.8 406.6 565.3 409.0 570.4 407.6 C575.5 406.2 585.4 402.6 590.7 398.7 C596.1 394.8 600.5 386.4 602.5 384.0"></path><path stroke-width="4.5" d="M587 386.5 L603.2 383.2 L605.4 399.5"></path><path stroke-width="5" d="M892.2 640.8 C886.8 640.2 870.8 638.4 860.0 637.5 C849.2 636.6 836.7 636.1 827.5 635.7 C818.3 635.3 813.8 635.1 805.0 635.0 C796.2 634.9 784.5 634.6 775.0 634.8 C765.5 635.0 758.8 635.0 748.0 636.0 C737.2 637.0 722.7 638.9 710.0 641.0 C697.3 643.1 683.7 646.3 672.0 648.9 C660.3 651.5 647.8 654.9 640.0 656.6 C632.2 658.3 632.8 658.2 625.5 659.0 C618.2 659.8 606.0 661.5 596.3 661.6 C586.5 661.7 576.8 661.2 567.0 659.6 C557.2 658.0 547.5 655.6 537.7 651.8 C527.9 648.0 518.2 642.7 508.4 636.6 C498.6 630.5 487.5 621.5 479.0 615.2 C470.5 608.9 461.1 601.7 457.5 599.0"></path><path stroke-width="5.2" d="M472.9 595.9 L457.3 598.5 L459.7 614"></path></g></svg>
</div>
</body></html>
